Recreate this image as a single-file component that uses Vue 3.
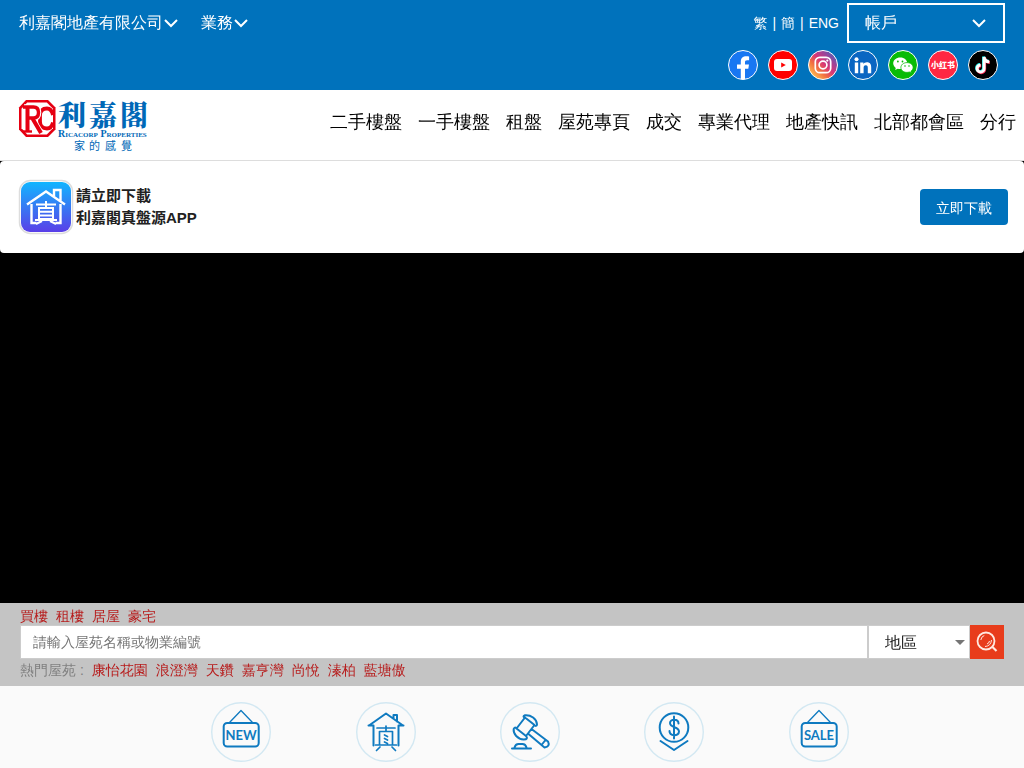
<script setup>
const navItems = ['二手樓盤', '一手樓盤', '租盤', '屋苑專頁', '成交', '專業代理', '地產快訊', '北部都會區', '分行']
const quickLinks = ['買樓', '租樓', '居屋', '豪宅']
const hotEstates = ['康怡花園', '浪澄灣', '天鑽', '嘉亨灣', '尚悅', '溱柏', '藍塘傲']
</script>

<template>
  <div class="page">
    <header class="topbar">
      <div class="toprow">
        <div class="menus">
          <button class="menu" type="button">
            利嘉閣地產有限公司<svg class="chev" viewBox="0 0 16 16"><path d="M2 5l6 6 6-6" /></svg>
          </button>
          <button class="menu" type="button">
            業務<svg class="chev" viewBox="0 0 16 16"><path d="M2 5l6 6 6-6" /></svg>
          </button>
        </div>
        <div class="topright">
          <div class="langs">
            <a href="#">繁</a><span>|</span><a href="#">簡</a><span>|</span><a href="#">ENG</a>
          </div>
          <button class="account" type="button">
            帳戶<svg class="chev" viewBox="0 0 16 16"><path d="M2 5l6 6 6-6" /></svg>
          </button>
        </div>
      </div>
      <div class="social">
        <a href="#" aria-label="Facebook">
          <svg viewBox="0 0 30 30">
            <circle cx="15" cy="15" r="14.5" fill="#1877f2" stroke="#fff" />
            <path fill="#fff" d="M12.800 29.200V18.800H9v-4.200h3.800v-2.800c0-3.900 2.200-5.600 5.400-5.600 1.400 0 2.600.2 2.900.3v3.700h-2c-1.600 0-2.100.9-2.100 2v2.400h4l-.7 4.200H17v10.500z" />
          </svg>
        </a>
        <a href="#" aria-label="YouTube">
          <svg viewBox="0 0 30 30">
            <circle cx="15" cy="15" r="14.5" fill="#f00" stroke="#fff" />
            <rect x="6" y="9" width="18" height="12" rx="3" fill="#fff" />
            <path fill="#f00" d="M13.200 12.400v5.200l4.600-2.600z" />
          </svg>
        </a>
        <a href="#" aria-label="Instagram">
          <svg viewBox="0 0 30 30">
            <defs>
              <linearGradient id="ig-fill" x1="0.1" y1="0.85" x2="0.85" y2="0.1">
                <stop offset="0" stop-color="#fec053" />
                <stop offset=".3" stop-color="#f2703f" />
                <stop offset=".55" stop-color="#d73578" />
                <stop offset=".8" stop-color="#9b4499" />
                <stop offset="1" stop-color="#5261b5" />
              </linearGradient>
            </defs>
            <circle cx="15" cy="15" r="14.5" fill="url(#ig-fill)" stroke="#fff" />
            <g fill="none" stroke="#fff" stroke-width="1.7">
              <rect x="7.300" y="7.300" width="15.400" height="15.400" rx="4.500" />
              <circle cx="15" cy="15" r="3.900" />
            </g>
            <circle cx="19.300" cy="10.600" r="1.100" fill="#fff" />
          </svg>
        </a>
        <a href="#" aria-label="LinkedIn">
          <svg viewBox="0 0 30 30">
            <circle cx="15" cy="15" r="14.5" fill="#0a66c2" stroke="#fff" />
            <g fill="#fff">
              <circle cx="8.500" cy="9.200" r="2" />
              <path d="M6.800 12.600h3.400v10.600H6.800zM12.200 12.600h3.200v1.500c.6-1 1.800-1.800 3.500-1.800 3.300 0 4.300 2.100 4.300 5.100v5.800h-3.400v-5.300c0-1.400-.2-2.700-2-2.700s-2.200 1.300-2.200 2.700v5.300h-3.400z" />
            </g>
          </svg>
        </a>
        <a href="#" aria-label="WeChat">
          <svg viewBox="0 0 30 30">
            <circle cx="15" cy="15" r="14.5" fill="#09bb07" stroke="#fff" />
            <path fill="#fff" d="M12.300 7.400c-4 0-7.100 2.600-7.100 5.900 0 1.900 1 3.500 2.600 4.600l-.7 2.200 2.600-1.400c.9.3 1.700.4 2.700.4 4 0 7-2.600 7-5.800s-3.100-5.900-7.100-5.900z" />
            <path fill="#fff" stroke="#09bb07" stroke-width=".8" d="M19 12.600c3.500 0 6.100 2.200 6.100 4.900 0 1.500-.9 2.900-2.200 3.800l.5 1.800-2-1.100c-.8.2-1.600.4-2.400.4-3.500 0-6.100-2.200-6.100-4.900s2.600-4.900 6.100-4.900z" />
            <g fill="#09bb07"><circle cx="9.900" cy="11.500" r=".9" /><circle cx="14.500" cy="11.500" r=".9" /><circle cx="17" cy="16" r=".8" /><circle cx="21" cy="16" r=".8" /></g>
          </svg>
        </a>
        <a href="#" aria-label="小红书">
          <svg viewBox="0 0 30 30">
            <circle cx="15" cy="15" r="14.5" fill="#ff2742" stroke="#fff" />
            <text class="xhs" x="15" y="18" text-anchor="middle">小红书</text>
          </svg>
        </a>
        <a href="#" aria-label="TikTok">
          <svg viewBox="0 0 30 30">
            <circle cx="15" cy="15" r="14.5" fill="#000" stroke="#fff" />
            <g fill="none" stroke-width="2.900">
              <path stroke="#25f4ee" d="M15.500 6.400v11.600a3.500 3.500 0 1 1-3.500-3.500M15.500 6.400c.3 3 2.400 4.700 5.200 4.900" />
              <path stroke="#fe2c55" d="M16.700 7.600v11.600a3.500 3.500 0 1 1-3.500-3.500M16.700 7.600c.3 3 2.400 4.700 5.200 4.900" />
              <path stroke="#fff" d="M16.100 7v11.600a3.500 3.500 0 1 1-3.500-3.500M16.100 7c.3 3 2.400 4.700 5.200 4.900" />
            </g>
          </svg>
        </a>
      </div>
    </header>

    <div class="mainbar">
      <a class="logo" href="#" aria-label="利嘉閣">
        <svg viewBox="0 0 132 54">
          <path fill="#e60012" d="M7 0h22l7.500 7.500v22L29 37H7l-7-7.500v-22z" />
          <path fill="#fff" d="M8.200 2.600h19.600l6.200 6.200v19.400l-6.200 6.200H8.200l-5.700-6.200V8.800z" />
          <path fill="none" stroke="#e60012" stroke-width="3.800" d="M34 15q-1.500-6.500-6-6.500-7 0-7 7v6q0 7 7 7 4.500 0 6-6" />
          <path fill="none" stroke="#fff" stroke-width="5.600" d="M5 7h9.500q5 0 5 5.500T14.500 18H10M13 18l8.500 14" />
          <g fill="none" stroke="#e60012">
            <path stroke-width="4" d="M8.500 6v26M13.500 18.500L22 33" />
            <path stroke-width="3.400" d="M4 7h10.500q5 0 5 5.500t-5 5.500H10" />
            <path stroke-width="2.400" d="M4 31.500h9" />
          </g>
          <g fill="#0068b7">
            <text class="brand" y="26" x="39 70 101">利嘉閣</text>
            <text class="latin" x="39" y="37">Ricacorp Properties</text>
            <text class="slogan" y="50" x="55 70 86 102">家的感覺</text>
          </g>
        </svg>
      </a>
      <nav class="nav">
        <a v-for="item in navItems" :key="item" href="#">{{ item }}</a>
      </nav>
    </div>

    <main>
      <section class="hero">
        <div class="appbanner">
          <svg class="appicon" viewBox="0 0 56 56">
            <defs>
              <linearGradient id="tile-fill" x1="0" y1="0" x2="0" y2="1">
                <stop offset="0" stop-color="#12b5ff" />
                <stop offset="1" stop-color="#5a3fe8" />
              </linearGradient>
            </defs>
            <rect x="1.500" y="1.500" width="53" height="53" rx="11" fill="#fff" stroke="#ddd" stroke-width="1.500" />
            <rect x="3" y="3" width="50" height="50" rx="9" fill="url(#tile-fill)" />
            <g fill="none" stroke="#fff" stroke-width="2.400">
              <path d="M9 25.500L28 12.500l19 13M36 17v-6h6.500v12M13.500 25v19h5M42.500 25v19h-5" />
              <path d="M18 25.500h20M28 22v6M21 29h14v11H21zM21 32.700h14M21 36.400h14M17 41h22M24 42l-6 3M32 42l6 3" stroke-width="2" />
            </g>
          </svg>
          <p class="apptext">請立即下載<br />利嘉閣真盤源APP</p>
          <button class="download" type="button">立即下載</button>
        </div>
      </section>

      <section class="search">
        <div class="links">
          <a v-for="q in quickLinks" :key="q" href="#">{{ q }}</a>
        </div>
        <form class="searchrow" @submit.prevent>
          <input type="text" aria-label="搜尋" placeholder="請輸入屋苑名稱或物業編號" />
          <div class="district">
            <select aria-label="地區"><option>地區</option></select>
          </div>
          <button class="go" type="submit" aria-label="搜尋">
            <svg viewBox="0 0 34 34" fill="none" stroke="#ffe9e0">
              <circle cx="16" cy="16" r="8.500" stroke-width="1.800" />
              <path d="M22.500 22l4 4" stroke-width="2.200" />
              <path d="M10.800 15q.5-3.500 3.500-4.500M15 21.500q6-.5 6.500-6.500M17 19q2-.5 2.500-3" stroke-width="1" />
            </svg>
          </button>
        </form>
        <div class="links">
          <span>熱門屋苑 :</span>
          <a v-for="h in hotEstates" :key="h" href="#">{{ h }}</a>
        </div>
      </section>

      <section class="shortcuts">
        <a href="#" aria-label="NEW">
          <svg viewBox="0 0 60 60">
            <circle class="ring" cx="30" cy="30" r="29.300" />
            <path d="M18.500 20.500L30 8.500l11.500 12" stroke-width="1.300" />
            <rect x="12.700" y="21" width="35" height="23.500" rx="3.500" />
            <text class="sign" x="30" y="38" text-anchor="middle">NEW</text>
          </svg>
        </a>
        <a href="#" aria-label="真盤源">
          <svg viewBox="0 0 60 60">
            <circle class="ring" cx="30" cy="30" r="29.300" />
            <path d="M13 23.500L30 11.500l17 12M37.500 16.500V13h3.500v6.500M12.500 23.500h5v20M47.500 23.500h-5v20" />
            <path d="M21 26h18M30 24v5M23.500 29.500h13V43M23.500 29.500V43M19.500 43h21M28.500 33l3 1.500M28.500 36.500l3 1.500M28.500 40l3 1.500M24 45l-3.500 3.500M36 45l3.500 3.500" stroke-width="1.700" />
          </svg>
        </a>
        <a href="#" aria-label="拍賣">
          <svg viewBox="0 0 60 60">
            <circle class="ring" cx="30" cy="30" r="29.300" />
            <path d="M16.500 26.500L25 15.500l9.500 7.500-8.500 11zM25 15.500q-3-1 0-2.200c6-.5 11.500 3.500 12 9 0 2-1.500 2-2.500.7M16.500 26.500q-2-2-2.800.5c-.7 5 4 10 10 10.500 3.500 0 4-1.500 2.300-3.500M31.500 27L48 39.500q2.500 5-3.500 6L28.500 32M41.500 43l4-5M14.500 45.500q1-3.500 4-3.500h4q3 0 4 3.500M12 46.500h19" />
          </svg>
        </a>
        <a href="#" aria-label="成交">
          <svg viewBox="0 0 60 60">
            <circle class="ring" cx="30" cy="30" r="29.300" />
            <circle cx="30" cy="25.500" r="14.300" />
            <path d="M34.500 21.500c0-5-8.500-5-8.500-.5 0 5 9 3.500 9 8.500 0 5-9.500 5-9.500-.5M30 14.500v22M16.500 39L30 48l13.500-9" />
          </svg>
        </a>
        <a href="#" aria-label="SALE">
          <svg viewBox="0 0 60 60">
            <circle class="ring" cx="30" cy="30" r="29.300" />
            <path d="M18.500 20.500L30 8.500l11.500 12" stroke-width="1.300" />
            <rect x="12.700" y="21" width="35" height="23.500" rx="3.500" />
            <text class="sign" x="30" y="38" text-anchor="middle">SALE</text>
          </svg>
        </a>
      </section>
    </main>
  </div>
</template>

<style>
body {
  margin: 0;
  background: #fafafa;
}
</style>

<style scoped>
* {
  box-sizing: border-box;
}
.page {
  font-family: "Liberation Sans", "Droid Sans Fallback", "WenQuanYi Zen Hei", "Noto Sans CJK TC", sans-serif;
  font-size: 14px;
  font-weight: 300;
  color: #212121;
}
a {
  color: inherit;
  text-decoration: none;
}
button,
input,
select {
  font-family: inherit;
  font-weight: inherit;
  margin: 0;
  border: 0;
}
svg {
  display: block;
}
.topbar {
  height: 90px;
  background: #0072bc;
  color: #fff;
  padding: 3px 19px 0;
}
.toprow {
  display: flex;
  justify-content: space-between;
  align-items: center;
  height: 40px;
}
.menus {
  display: flex;
  gap: 22px;
}
.menu {
  display: flex;
  align-items: center;
  padding: 0;
  background: none;
  color: #fff;
  font-size: 16px;
}
.chev {
  width: 16px;
  height: 16px;
  fill: none;
  stroke: #fff;
  stroke-width: 2;
}
.topright {
  display: flex;
  align-items: center;
  gap: 8px;
}
.langs {
  display: flex;
  align-items: baseline;
  gap: 5px;
  padding-top: 2px;
}
.account {
  display: flex;
  justify-content: space-between;
  align-items: center;
  width: 158px;
  height: 40px;
  padding: 0 16px;
  border: 2px solid #fff;
  background: none;
  color: #fff;
  font-size: 16px;
}
.social {
  display: flex;
  justify-content: flex-end;
  gap: 10px;
  padding: 7px 7px 0 0;
}
.social svg {
  width: 30px;
  height: 30px;
}
.xhs {
  font: 900 8px "Noto Sans CJK SC", sans-serif;
  fill: #fff;
}
.mainbar {
  display: flex;
  justify-content: space-between;
  height: 71px;
  padding: 0 8px 0 19px;
  background: #fff;
  border-bottom: 1px solid #ddd;
}
.logo svg {
  width: 132px;
  height: 54px;
  margin-top: 10px;
  overflow: visible;
}
.brand {
  font: 900 28px "Noto Serif CJK TC", "Noto Sans CJK TC", serif;
}
.latin {
  font: 700 10px "Liberation Serif", serif;
  font-variant: small-caps;
}
.slogan {
  font: 400 11px "Noto Sans CJK TC", sans-serif;
}
.nav {
  display: flex;
  gap: 16px;
  padding-top: 19px;
  font-size: 18px;
  line-height: 26px;
  color: #000;
  white-space: nowrap;
}
.hero {
  height: 442px;
  background: #000;
}
.appbanner {
  display: flex;
  align-items: center;
  height: 92px;
  padding: 0 16px 0 18px;
  background: #fff;
  border-radius: 4px;
}
.appicon {
  width: 56px;
  height: 56px;
}
.apptext {
  flex: 1;
  margin: 0 0 0 2px;
  font-family: "Liberation Sans", "Noto Sans CJK TC", sans-serif;
  font-size: 15px;
  font-weight: 700;
  line-height: 22px;
}
.download {
  width: 88px;
  height: 36px;
  border-radius: 4px;
  background: #0072bc;
  color: #fff;
  font-size: 14px;
  padding: 3px 0 0;
}
.search {
  background: #c4c4c4;
  padding: 3px 20px 6px;
}
.links {
  display: flex;
  gap: 8px;
  height: 20px;
  line-height: 20px;
  color: #b71c1c;
}
.links span {
  color: #808080;
}
.searchrow {
  display: flex;
  height: 34px;
  margin-top: -1px;
  margin-bottom: 1px;
}
.searchrow input {
  flex: 1;
  min-width: 0;
  padding: 0 12px;
  border: 1px solid #ccc;
  background: #fff;
  font-size: 14px;
}
.searchrow input::placeholder {
  color: #757575;
}
.district {
  position: relative;
  width: 102px;
}
.district select {
  width: 100%;
  height: 34px;
  padding: 0 16px;
  border: 1px solid #ccc;
  border-radius: 0;
  appearance: none;
  background: #fff;
  color: #212121;
  font-size: 16px;
}
.district::after {
  content: "";
  position: absolute;
  right: 5px;
  top: 15px;
  border: 5px solid transparent;
  border-top-color: #757575;
  border-bottom: 0;
  pointer-events: none;
}
.go {
  width: 34px;
  height: 34px;
  padding: 0;
  background: #e83c1b;
}
.shortcuts {
  display: grid;
  grid-template-columns: repeat(5, 1fr);
  justify-items: center;
  padding: 16px 13% 6px 16.5%;
  background: #fafafa;
}
.shortcuts svg {
  width: 60px;
  height: 60px;
  fill: none;
  stroke: #0f7ac0;
  stroke-width: 2;
  stroke-linecap: round;
  stroke-linejoin: round;
}
.shortcuts .ring {
  stroke: #d3e8f2;
  stroke-width: 1.4;
}
.sign {
  font: 700 13px Lato, "Liberation Sans", sans-serif;
  fill: #0f7ac0;
  stroke: none;
}
</style>
